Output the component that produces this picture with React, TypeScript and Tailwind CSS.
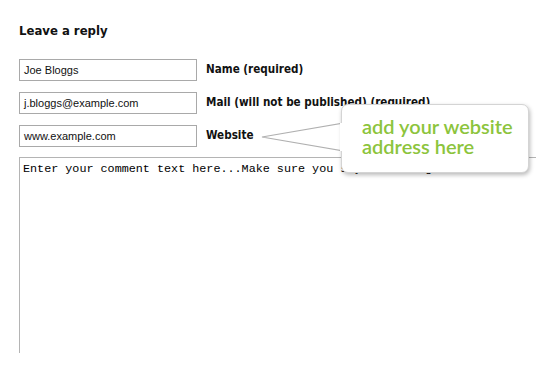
import React from "react";

const labelFont = { fontFamily: '"DejaVu Sans Condensed", "DejaVu Sans", sans-serif' };

export default function App() {
  return (
    <div className="relative w-[548px] h-[367px] bg-white overflow-hidden">
      <div className="pl-[19px] pt-[23px] flex flex-col">
        <h3
          className="text-[13px] leading-[16px] font-bold text-[#111]"
          style={labelFont}
        >
          Leave a reply
        </h3>
        <div className="mt-[20px] flex flex-col gap-[11px]">
          {[
            ["Joe Bloggs", "Name (required)"],
            ["j.bloggs@example.com", "Mail (will not be published) (required)"],
            ["www.example.com", "Website"],
          ].map(([v, l]) => (
            <div key={l} className="flex items-center gap-[9px] h-[22px]">
              <div className="w-[178px] h-[22px] border border-[#a9a9a9] flex items-center pl-[4px] text-[11px] text-[#111] font-['Liberation_Sans',Arial,sans-serif]">
                {v}
              </div>
              <span className="text-[11.6px] font-bold text-[#111]" style={labelFont}>
                {l}
              </span>
            </div>
          ))}
        </div>
        <div className="mt-[10px] w-[517px] h-[196px] border-t border-l border-[#b4b4b4] pl-[3px] pt-[4px] text-[11.75px] leading-[14px] text-[#000] font-['Liberation_Mono','Courier_New',monospace]">
          Enter your comment text here...Make sure you say something nice!
        </div>
      </div>

      {/* callout pointer */}
      <svg
        className="absolute left-[258px] top-[119px]"
        width="90"
        height="38"
        viewBox="0 0 90 38"
      >
        <polygon
          points="4,18 86,4 86,32"
          fill="#ffffff"
          stroke="#b0b0b0"
          strokeWidth="1.2"
        />
      </svg>
      {/* callout box */}
      <div className="absolute left-[341px] top-[104px] w-[188px] h-[69px] bg-white rounded-[7px] border border-[#d4d4d4] shadow-[1px_2px_4px_rgba(0,0,0,0.28)] pl-[20px] pt-[11px]">
        <div className="text-[20px] leading-[20px] font-semibold text-[#8cc43c] font-['Lato',sans-serif] tracking-[0px]">
          add your website
          <br />
          address here
        </div>
      </div>
      {/* cover the pointer join on the box edge */}
      <div className="absolute left-[340px] top-[123px] w-[4px] h-[28px] bg-white" />
    </div>
  );
}
